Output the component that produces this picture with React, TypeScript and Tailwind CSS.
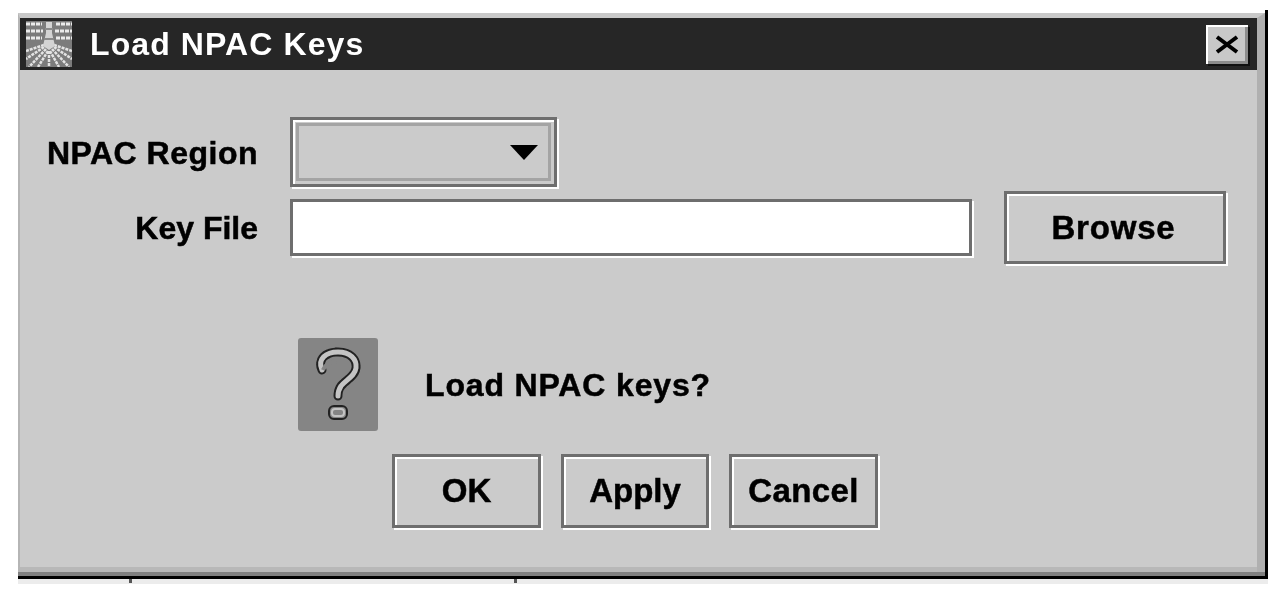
const etched = "border-[3px] border-[#6e6e6e] shadow-[inset_2px_2px_0_#fff,2px_2px_0_#fff] bg-[#cbcbcb]";
const heavy = "[-webkit-text-stroke:0.5px_#000]";

function Logo() {
  return (
    <svg width="46" height="46" viewBox="0 0 46 46" className="shrink-0">
      <rect width="46" height="46" fill="#7c7c7c" />
      <g stroke="#ececec" strokeWidth="3" strokeDasharray="4 1" fill="none">
        <path d="M0 3H16M30 3H46" />
        <path d="M0 10H17M29 10H46" />
        <path d="M0 17H16M30 17H46" />
      </g>
      <g stroke="#e4e4e4" strokeWidth="2.5" strokeDasharray="3 1" fill="none">
        <path d="M18 24L0 30M18 26L0 38M20 28L3 46M22 30L12 46M23 30L23 46M24 30L33 46M26 28L43 46M28 26L46 38M28 24L46 30" />
      </g>
      <path d="M20 1H26V12L29 25L23 29L17 25L20 12Z" fill="#d4d4d4" />
      <path d="M19 8H27M18 18H28" stroke="#8a8a8a" strokeWidth="2" />
    </svg>
  );
}

function QuestionIcon() {
  return (
    <div className="w-[80px] h-[93px] rounded-[3px] bg-[#858585] flex items-center justify-center">
      <svg width="50" height="76" viewBox="0 0 50 76" fill="none">
        <path
          d="M9 23C4 12 13 5 25 5C37 5 44 12 43 21C42 29 33 33 28 39C26 42 25 44 25 49"
          stroke="#222"
          strokeWidth="9"
          strokeLinecap="round"
          strokeDasharray="6 1"
        />
        <path
          d="M9 23C4 12 13 5 25 5C37 5 44 12 43 21C42 29 33 33 28 39C26 42 25 44 25 49"
          stroke="#c4c4c4"
          strokeWidth="5"
          strokeLinecap="round"
        />
        <path d="M10 23C12 17 16 15 23 14" stroke="#858585" strokeWidth="4" />
        <rect x="16" y="59" width="18" height="13" rx="5" fill="#858585" stroke="#222" strokeWidth="2" />
        <rect x="19" y="62" width="12" height="7" rx="3" fill="#858585" stroke="#c4c4c4" strokeWidth="2" />
      </svg>
    </div>
  );
}

function Button({ label, className }: { label: string; className: string }) {
  return (
    <button className={`${etched} ${heavy} ${className} flex items-center justify-center font-bold text-black`}>
      {label}
    </button>
  );
}

export default function App() {
  return (
    <div className="w-[1284px] h-[595px] bg-white overflow-hidden pl-[18px] pt-[10px] font-['Liberation_Sans',Arial,sans-serif] blur-[0.5px]">
      <div className="w-[1250px] border-r-[3px] border-black pt-[3px]">
        <div className="border-t-[5px] border-t-[#c9c9c9] border-l-[2px] border-l-[#b5b5b5] border-r-[8px] border-r-[#b0b0b0] bg-[#cbcbcb]">
          {/* title bar */}
          <div className="h-[52px] bg-[#262626] flex items-center pl-[6px] pr-[9px]">
            <Logo />
            <span className="ml-[18px] text-white text-[32px] font-bold tracking-[1.1px]">Load NPAC Keys</span>
            <div className="ml-auto w-[42px] h-[39px] bg-[#c8c8c8] shadow-[inset_2px_2px_0_#fff,inset_-3px_-3px_0_#8c8c8c,2px_2px_0_#111] flex items-center justify-center">
              <svg width="24" height="19" viewBox="0 0 24 19">
                <path d="M2 2L22 17M22 2L2 17" stroke="#000" strokeWidth="4" />
              </svg>
            </div>
          </div>

          {/* form */}
          <div className="h-[502px] pt-[47px] border-b-[5px] border-b-[#b8b8b8]">
            <div className="flex items-center h-[71px]">
              <label className={`w-[238px] text-right text-[32px] font-bold text-black tracking-[0.5px] ${heavy}`}>NPAC Region</label>
              <div className={`${etched} ml-[32px] mb-[1px] w-[267px] h-[70px] p-[3px]`}>
                <div className="h-full border-[3px] border-[#a4a4a4] flex items-center justify-end pr-[10px]">
                  <svg width="28" height="15" viewBox="0 0 28 15">
                    <path d="M0 0H28L14 15Z" fill="#000" />
                  </svg>
                </div>
              </div>
            </div>

            <div className="flex items-center h-[74px] mt-[3px]">
              <label className={`w-[238px] text-right text-[32px] font-bold text-black ${heavy}`}>Key File</label>
              <input
                readOnly
                className="ml-[32px] mb-[1px] w-[682px] h-[57px] bg-white border-[3px] border-[#6e6e6e] shadow-[2px_2px_0_#fff] outline-none"
              />
              <Button label="Browse" className="ml-[32px] mb-[1px] w-[222px] h-[73px] text-[33px] tracking-[0.8px] pr-[3px]" />
            </div>

            <div className="flex items-center ml-[278px] mt-[73px]">
              <QuestionIcon />
              <span className={`ml-[47px] text-[32px] font-bold text-black tracking-[0.85px] ${heavy}`}>Load NPAC keys?</span>
            </div>

            <div className="flex gap-[20px] ml-[372px] mt-[23px]">
              <Button label="OK" className="w-[149px] h-[74px] text-[33px]" />
              <Button label="Apply" className="w-[148px] h-[74px] text-[33px]" />
              <Button label="Cancel" className="w-[149px] h-[74px] text-[33px] tracking-[0.4px]" />
            </div>
          </div>
        </div>
        <div className="h-[4px] bg-[#808080]" />
        <div className="h-[3px] bg-black" />
      </div>

      {/* strip of the window underneath */}
      <div className="w-[1250px] h-[5px] bg-[#ececec] flex">
        <div className="ml-[111px] w-[3px] h-[4px] bg-[#555]" />
        <div className="ml-[382px] w-[3px] h-[4px] bg-[#555]" />
      </div>
    </div>
  );
}
